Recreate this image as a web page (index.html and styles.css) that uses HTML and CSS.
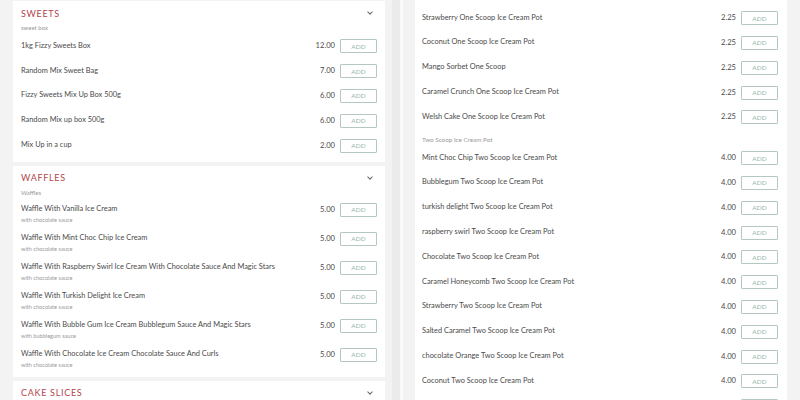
FILE: index.html
```html
<!DOCTYPE html>
<html lang="en">
<head>
    <meta charset="UTF-8">
    <meta name="viewport" content="width=device-width, initial-scale=1.0">
    <title>Menu</title>
    <link rel="stylesheet" href="styles.css">
</head>
<body>
    <div class="pane left-pane">
        <section class="card">
            <div class="card-head">
                <h3>Sweets</h3>
                <span class="chevron"></span>
            </div>
            <div class="group-label">sweet box</div>
            <div class="item"><span class="name">1kg Fizzy Sweets Box</span><span class="price">12.00</span><button>ADD</button></div>
            <div class="item"><span class="name">Random Mix Sweet Bag</span><span class="price">7.00</span><button>ADD</button></div>
            <div class="item"><span class="name">Fizzy Sweets Mix Up Box 500g</span><span class="price">6.00</span><button>ADD</button></div>
            <div class="item"><span class="name">Random Mix up box 500g</span><span class="price">6.00</span><button>ADD</button></div>
            <div class="item"><span class="name">Mix Up in a cup</span><span class="price">2.00</span><button>ADD</button></div>
        </section>

        <section class="card">
            <div class="card-head">
                <h3>Waffles</h3>
                <span class="chevron"></span>
            </div>
            <div class="group-label">Waffles</div>
            <div class="item item-desc">
                <div class="info"><span class="name">Waffle With Vanilla Ice Cream</span><span class="desc">with chocolate sauce</span></div>
                <span class="price">5.00</span><button>ADD</button>
            </div>
            <div class="item item-desc">
                <div class="info"><span class="name">Waffle With Mint Choc Chip Ice Cream</span><span class="desc">with chocolate sauce</span></div>
                <span class="price">5.00</span><button>ADD</button>
            </div>
            <div class="item item-desc">
                <div class="info"><span class="name">Waffle With Raspberry Swirl Ice Cream With Chocolate Sauce And Magic Stars</span><span class="desc">with chocolate sauce</span></div>
                <span class="price">5.00</span><button>ADD</button>
            </div>
            <div class="item item-desc">
                <div class="info"><span class="name">Waffle With Turkish Delight Ice Cream</span><span class="desc">with chocolate sauce</span></div>
                <span class="price">5.00</span><button>ADD</button>
            </div>
            <div class="item item-desc">
                <div class="info"><span class="name">Waffle With Bubble Gum Ice Cream Bubblegum Sauce And Magic Stars</span><span class="desc">with bubblegum sauce</span></div>
                <span class="price">5.00</span><button>ADD</button>
            </div>
            <div class="item item-desc">
                <div class="info"><span class="name">Waffle With Chocolate Ice Cream Chocolate Sauce And Curls</span><span class="desc">with chocolate sauce</span></div>
                <span class="price">5.00</span><button>ADD</button>
            </div>
        </section>

        <section class="card">
            <div class="card-head">
                <h3>Cake Slices</h3>
                <span class="chevron"></span>
            </div>
        </section>
    </div>

    <div class="divider"></div>

    <div class="pane right-pane">
        <section class="card card-scrolled">
            <div class="item"><span class="name"></span><button aria-label="Add"></button></div>
            <div class="item"><span class="name">Strawberry One Scoop Ice Cream Pot</span><span class="price">2.25</span><button>ADD</button></div>
            <div class="item"><span class="name">Coconut One Scoop Ice Cream Pot</span><span class="price">2.25</span><button>ADD</button></div>
            <div class="item"><span class="name">Mango Sorbet One Scoop</span><span class="price">2.25</span><button>ADD</button></div>
            <div class="item"><span class="name">Caramel Crunch One Scoop Ice Cream Pot</span><span class="price">2.25</span><button>ADD</button></div>
            <div class="item"><span class="name">Welsh Cake One Scoop Ice Cream Pot</span><span class="price">2.25</span><button>ADD</button></div>
            <div class="group-label group-label-wide">Two Scoop Ice Cream Pot</div>
            <div class="item"><span class="name">Mint Choc Chip Two Scoop Ice Cream Pot</span><span class="price">4.00</span><button>ADD</button></div>
            <div class="item"><span class="name">Bubblegum Two Scoop Ice Cream Pot</span><span class="price">4.00</span><button>ADD</button></div>
            <div class="item"><span class="name">turkish delight Two Scoop Ice Cream Pot</span><span class="price">4.00</span><button>ADD</button></div>
            <div class="item"><span class="name">raspberry swirl Two Scoop Ice Cream Pot</span><span class="price">4.00</span><button>ADD</button></div>
            <div class="item"><span class="name">Chocolate Two Scoop Ice Cream Pot</span><span class="price">4.00</span><button>ADD</button></div>
            <div class="item"><span class="name">Caramel Honeycomb Two Scoop Ice Cream Pot</span><span class="price">4.00</span><button>ADD</button></div>
            <div class="item"><span class="name">Strawberry Two Scoop Ice Cream Pot</span><span class="price">4.00</span><button>ADD</button></div>
            <div class="item"><span class="name">Salted Caramel Two Scoop Ice Cream Pot</span><span class="price">4.00</span><button>ADD</button></div>
            <div class="item"><span class="name">chocolate Orange Two Scoop Ice Cream Pot</span><span class="price">4.00</span><button>ADD</button></div>
            <div class="item"><span class="name">Coconut Two Scoop Ice Cream Pot</span><span class="price">4.00</span><button>ADD</button></div>
            <div class="item"><span class="name"></span><button aria-label="Add"></button></div>
        </section>
    </div>
</body>
</html>
```

FILE: styles.css
```css
html, body {
    margin: 0;
    padding: 0;
    height: 100%;
    overflow: hidden;
}

body {
    font-family: Lato, "Open Sans", sans-serif;
    background-color: #f3f3f3;
    color: #4a4a4a;
    display: flex;
}

.pane {
    height: 100%;
    overflow: hidden;
    box-sizing: border-box;
}

.left-pane {
    width: 392px;
    padding: 1px 7px 0 13px;
}

.divider {
    width: 8px;
    background-color: #ebebeb;
    border-right: 3px solid #fafafa;
}

.right-pane {
    flex: 1;
    padding: 0 13px 0 12px;
}

.card {
    background-color: #ffffff;
    padding: 0 8px 5px 8px;
    margin-bottom: 4px;
}

.card-scrolled {
    margin-top: -20px;
    padding-left: 7px;
    padding-right: 9px;
}

.card-head {
    display: flex;
    justify-content: space-between;
    align-items: center;
    padding-top: 5px;
    height: 14px;
}

.card-head h3 {
    margin: 0;
    font-size: 9px;
    font-weight: 400;
    letter-spacing: 0.7px;
    text-transform: uppercase;
    color: #b2454d;
}

.chevron {
    width: 3px;
    height: 3px;
    margin-right: 5px;
    border-right: 1px solid #666;
    border-bottom: 1px solid #666;
    transform: rotate(45deg);
    margin-top: -2px;
}

.group-label {
    font-size: 6px;
    line-height: 10px;
    margin-top: 3px;
    color: #999;
}

.group-label-wide {
    font-size: 6.3px;
    margin-top: 0;
    padding-top: 6px;
}

.item {
    display: flex;
    align-items: center;
    height: 24.8px;
    font-size: 7.4px;
}

.item .name {
    flex: 1;
}

.item-desc {
    align-items: flex-start;
    height: 29px;
    padding-top: 5px;
    box-sizing: border-box;
}

.info {
    flex: 1;
    display: flex;
    flex-direction: column;
}

.info .name {
    line-height: 12px;
}

.info .desc {
    font-size: 5.6px;
    line-height: 9px;
    color: #999;
}

.price {
    margin-right: 5px;
    line-height: 12px;
    font-size: 7.6px;
}

.item button {
    width: 37px;
    height: 14px;
    padding: 0;
    background-color: #fff;
    border: 1px solid #b4c8c0;
    border-radius: 1px;
    font-family: Lato, sans-serif;
    font-size: 6.5px;
    color: #93b5a8;
    margin-bottom: -2px;
}
```
